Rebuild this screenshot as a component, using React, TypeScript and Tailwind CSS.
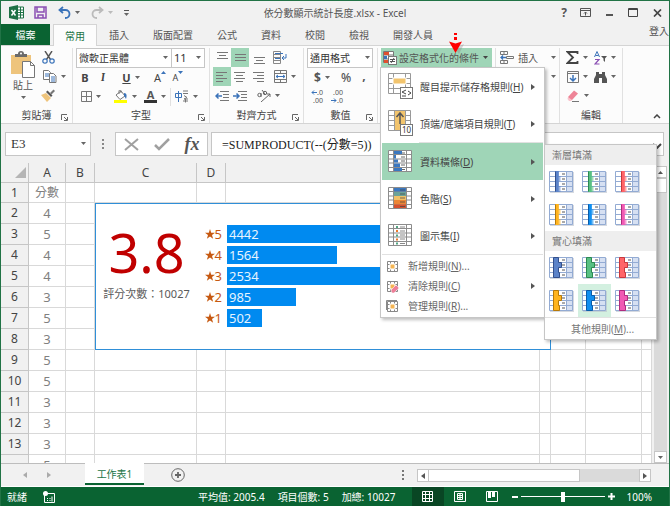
import React from "react";

const ratings = [
  { star: 5, count: 4442 },
  { star: 4, count: 1564 },
  { star: 3, count: 2534 },
  { star: 2, count: 985 },
  { star: 1, count: 502 },
];

const scores = [4, 5, 4, 4, 3, 5, 3, 5, 5, 3, 3, 3, 5];

const tabs = ["插入", "版面配置", "公式", "資料", "校閱", "檢視", "開發人員"];

const barColors = [
  { name: "藍色", fill: "#5b83c9", line: "#33508c" },
  { name: "綠色", fill: "#58c083", line: "#2c8a50" },
  { name: "紅色", fill: "#ff6468", line: "#c8383c" },
  { name: "橙色", fill: "#ffb41f", line: "#b87a08" },
  { name: "淺藍色", fill: "#0f8ef0", line: "#0a5ca8" },
  { name: "紫色", fill: "#f05ab4", line: "#b02c7e" },
];

const Caret: React.FC<{ className?: string }> = ({ className = "text-[#666]" }) => (
  <svg className={`shrink-0 ${className}`} width="5" height="3" viewBox="0 0 5 3">
    <path d="M0 0h5L2.5 3z" fill="currentColor" />
  </svg>
);

const RightCaret = () => (
  <svg width="4" height="6" viewBox="0 0 4 6">
    <path d="M0 0l4 3-4 3z" fill="#555" />
  </svg>
);

const Launcher = () => (
  <svg width="7" height="7" viewBox="0 0 7 7" fill="none" stroke="#666">
    <path d="M.5 6V.5H6M3 3l3 3M6.5 3v3.5H3" />
  </svg>
);

const Divider = () => <span className="h-[18px] w-px bg-[#e1e1e1]" />;

interface ToolProps {
  label: string;
  active?: boolean;
  wide?: boolean;
  caret?: boolean;
  children: React.ReactNode;
}

const Tool: React.FC<ToolProps> = ({ label, active, wide, caret, children }) => (
  <button
    aria-label={label}
    className={`flex h-[19px] items-center justify-center gap-1 ${caret ? "w-[30px]" : wide ? "w-[20px]" : "w-[18px]"} ${active ? "bg-[#9fd5b7]" : ""}`}
  >
    {children}
    {caret && <Caret />}
  </button>
);

interface GroupProps {
  label?: string;
  width: string;
  launcher?: boolean;
  children: React.ReactNode;
}

const Group: React.FC<GroupProps> = ({ label, width, launcher, children }) => (
  <section className={`flex shrink-0 flex-col border-r border-[#e1e1e1] ${width}`}>
    <div className="h-[59px] px-[3px]">{children}</div>
    <div className="relative flex h-4 items-center justify-center">
      {label && <span>{label}</span>}
      {launcher && (
        <button aria-label={`${label}設定`} className="absolute right-1 bottom-0.5">
          <Launcher />
        </button>
      )}
    </div>
  </section>
);

const AlignIcon: React.FC<{ lines: string }> = ({ lines }) => (
  <svg width="13" height="13" viewBox="0 0 13 13" fill="none" stroke="#777">
    <path d={lines} />
  </svg>
);

const SmallBars: React.FC<{ fill: string; line: string; solid?: boolean }> = ({ fill, line, solid }) => {
  const id = `fade-${fill.slice(1)}`;
  return (
    <svg width="25" height="22" viewBox="0 0 25 22">
      <defs>
        <linearGradient id={id}>
          <stop offset="0" stopColor={fill} />
          <stop offset="0.5" stopColor={fill} />
          <stop offset="1" stopColor={fill} stopOpacity="0.15" />
        </linearGradient>
      </defs>
      <rect x="1" y="1" width="24" height="21" fill="#b9c0cc" opacity="0.6" />
      <rect x="0.5" y="0.5" width="23" height="20" fill="#fff" />
      <path d="M17.5.5h6v20h-6z" fill="#d6e0f2" />
      <path d="M.5.5h23v20H.5zM.5 5.5h23M.5 10.5h23M.5 15.5h23M17.5.5v20M6.5.5v20" fill="none" stroke="#93abd3" />
      <path d="M13 3h3M13 8h3M13 13h3M13 18h3" stroke="#555" />
      {solid ? (
        <path d="M4.500 .5h5v5h3v5h-3v5h1v5h-6z" fill={fill} stroke={line} />
      ) : (
        <>
          <path d="M6 0h4v5h2v5h-2v5h2v6H6z" fill={`url(#${id})`} />
          <path d="M6.500 .5v20" stroke={line} />
        </>
      )}
    </svg>
  );
};

const GridBase = () => (
  <>
    <rect x="0.5" y="0.5" width="23" height="21" fill="#fff" />
    <path d="M.5.5h23v21H.5zM.5 4.500h23M.5 9h23M.5 13h23M.5 17.500h23M5.500 .5v21M18.500 .5v21" fill="none" stroke="#8c8c8c" />
  </>
);

const HighlightIcon = () => (
  <svg width="25" height="27" viewBox="0 0 25 27">
    <path d="M.5.5h22v20H.5zM.5 5.500h22M.5 10.500h22M.5 15.500h22M5.500 .5v20M17.500 .5v20" fill="#fff" stroke="#999" />
    <path d="M5 5h13v6H5z" fill="#f2c46d" stroke="#fff" />
    <rect x="12.500" y="14.500" width="12" height="11" fill="#fff" stroke="#777" />
    <path d="M18 17l-4 2 4 2M14 23h4M20 18l3 2-3 2" fill="none" stroke="#444" />
  </svg>
);

const TopBottomIcon = () => (
  <svg width="25" height="27" viewBox="0 0 25 27">
    <path d="M.5.5h22v20H.5zM.5 5.500h22M.5 10.500h22M.5 15.500h22M6.500 .5v20M17.500 .5v20" fill="#fff" stroke="#999" />
    <path d="M7 1h10v19H7z" fill="#f2c46d" />
    <path d="M12 14V3M8.500 7L12 3l3.500 4" fill="none" stroke="#555" strokeWidth="1.500" />
    <rect x="12.500" y="14.500" width="12" height="11" fill="#fff" stroke="#777" />
    <text x="14" y="23" fontSize="8" fill="#333" fontFamily="Noto Sans">10</text>
  </svg>
);

const DataBarIcon = () => (
  <svg width="25" height="23" viewBox="0 0 25 23">
    <GridBase />
    <path d="M6 1h8v3H6zM6 5h2v3.500H6zM6 9.500h4v3H6zM6 13.500h6v3.500H6zM6 18h8v3H6z" fill="#3b78c0" />
    <path d="M14 3h3M13 7h4M13 11h4M13 15h4M14 19.500h3" stroke="#666" />
  </svg>
);

const ColorScaleIcon = () => (
  <svg width="25" height="23" viewBox="0 0 25 23">
    <GridBase />
    <path d="M6 1h12v3.500H6z" fill="#3b78c0" />
    <path d="M6 5h12v4H6z" fill="#6ba398" />
    <path d="M6 9h12v4H6z" fill="#f0c167" />
    <path d="M6 13h12v4.500H6z" fill="#ec8635" />
    <path d="M6 17.500h12V21H6z" fill="#d6502e" />
    <path d="M12 3h5M12 7h5M12 11h5M12 15h5M12 19.500h5" stroke="#444" opacity="0.7" />
  </svg>
);

const IconSetIcon = () => (
  <svg width="25" height="23" viewBox="0 0 25 23">
    <GridBase />
    <path d="M8 2h2v2H8zM8 10.500h2v2H8zM8 18.500h2v2H8z" fill="#53a583" />
    <path d="M8 6h2v2H8zM8 14.500h2v2H8z" fill="#ec7a2c" />
    <path d="M12 3h5M12 7h5M12 11h5M12 15h5M12 19.500h5" stroke="#888" />
  </svg>
);

const RuleIcon: React.FC<{ kind: "new" | "clear" | "manage" }> = ({ kind }) => (
  <svg width="13" height="13" viewBox="0 0 13 13" fill="none">
    {kind === "manage" && <path d="M.5 10V.5H11" stroke="#888" />}
    <path d="M1.500 1.500h10v10h-10zM4.500 1.500v2M8.500 1.500v2M4.500 9.500v2M8.500 9.500v2M1.500 4.500h2M1.500 8.500h2M9.500 4.500h2M9.500 8.500h2" stroke="#888" />
    <path d="M4.500 4.500h4v4h-4z" fill="#f4b554" />
    {kind === "clear" && <path d="M5 10l5-5 3 3-5 5H6z" fill="#ee7f98" stroke="#fff" strokeWidth="0.500" />}
  </svg>
);

interface MenuItemProps {
  icon: React.ReactNode;
  text: string;
  hotkey: string;
  active?: boolean;
}

const MenuItem: React.FC<MenuItemProps> = ({ icon, text, hotkey, active }) => (
  <button
    role="menuitem"
    className={`flex h-[37px] w-full items-center pr-2 pl-1.5 ${active ? "bg-[#9fd5b7]" : ""}`}
  >
    <span className="w-8">{icon}</span>
    <span className="flex-1 text-left">
      {text}(<u>{hotkey}</u>)
    </span>
    <RightCaret />
  </button>
);

const RuleItem: React.FC<{ kind: "new" | "clear" | "manage"; text: string; hotkey: string }> = ({ kind, text, hotkey }) => (
  <button role="menuitem" className="flex h-5 w-full items-center pr-2 pl-1 text-[#666]">
    <span className="w-[22px]">
      <RuleIcon kind={kind} />
    </span>
    <span className="flex-1 text-left">
      {text}(<u>{hotkey}</u>){kind !== "clear" && "..."}
    </span>
    {kind === "clear" && <RightCaret />}
  </button>
);

const DataBarGallery = () => (
  <div className="absolute top-px left-full z-20 ml-px w-[113px] border border-[#c6c6c6] bg-white text-[#777] shadow-[2px_2px_3px_rgba(0,0,0,0.25)]">
    {[
      { title: "漸層填滿", solid: false },
      { title: "實心填滿", solid: true },
    ].map(({ title, solid }) => (
      <div key={title}>
        <div className="flex h-5 items-center bg-[#eee] pl-[7px]">{title}</div>
        <div className="grid w-[99px] grid-cols-3">
          {barColors.map((color) => (
            <button
              key={color.name}
              aria-label={`${color.name}${title}`}
              className={`flex h-[33px] items-center justify-center ${solid && color.name === "淺藍色" ? "bg-[#d3f0e0]" : ""}`}
            >
              <SmallBars fill={color.fill} line={color.line} solid={solid} />
            </button>
          ))}
        </div>
      </div>
    ))}
    <button role="menuitem" className="h-[22px] w-full border-t border-[#e1e1e1] pl-1">
      其他規則(<u>M</u>)...
    </button>
  </div>
);

const FormatMenu = () => (
  <div role="menu" className="absolute top-full left-[-1px] z-10 w-[165px] border border-[#c6c6c6] bg-white px-px pb-px shadow-[2px_2px_3px_rgba(0,0,0,0.25)]">
    <MenuItem icon={<HighlightIcon />} text="醒目提示儲存格規則" hotkey="H" />
    <MenuItem icon={<TopBottomIcon />} text="頂端/底端項目規則" hotkey="T" />
    <div className="ml-[37px] h-px bg-[#e1e1e1]" />
    <div className="relative">
      <MenuItem icon={<DataBarIcon />} text="資料橫條" hotkey="D" active />
      <DataBarGallery />
    </div>
    <MenuItem icon={<ColorScaleIcon />} text="色階" hotkey="S" />
    <MenuItem icon={<IconSetIcon />} text="圖示集" hotkey="I" />
    <div className="mb-px h-px bg-[#e1e1e1]" />
    <RuleItem kind="new" text="新增規則" hotkey="N" />
    <RuleItem kind="clear" text="清除規則" hotkey="C" />
    <RuleItem kind="manage" text="管理規則" hotkey="R" />
  </div>
);

const TitleBar = () => (
  <header className="grid h-[23px] grid-cols-[1fr_auto_1fr] items-center text-[#555]">
    <div className="flex items-center pl-2">
      <svg width="15" height="15" viewBox="0 0 15 15">
        <path d="M8 2h6.500v11H8z" fill="#fff" stroke="#1e7145" />
        <path d="M9 5h5M9 7.500h5M9 10h5M11.500 2v11" stroke="#1e7145" />
        <path d="M0 2l9-2v15l-9-2z" fill="#1e7145" />
        <path d="M2.500 5l4 5.500M6.500 5l-4 5.500" stroke="#fff" strokeWidth="1.500" />
      </svg>
      <button aria-label="儲存檔案" className="ml-2.5">
        <svg width="13" height="13" viewBox="0 0 13 13" fill="none" stroke="#8a4fb3" strokeWidth="1.500">
          <path d="M1 1h11v11H1zM3 1v5h7V1M4 12V9h5v3" />
        </svg>
      </button>
      <button aria-label="復原" className="ml-[11px] flex items-center gap-1">
        <svg width="13" height="13" viewBox="0 0 13 13" fill="none" stroke="#3b73b9" strokeWidth="1.800">
          <path d="M5 1L1.500 4 5 7M2 4h5.500a4 4 0 010 8H7" />
        </svg>
        <Caret />
      </button>
      <button aria-label="重複" className="ml-[11px] flex items-center gap-1">
        <svg width="13" height="13" viewBox="0 0 13 13" fill="none" stroke="#bbb" strokeWidth="1.800">
          <path d="M8 1l3.500 3L8 7M11 4H5.500a4 4 0 000 8H6" />
        </svg>
        <Caret className="text-[#bbb]" />
      </button>
      <button aria-label="自訂快速存取工具列" className="ml-[11px] flex flex-col items-center gap-0.5">
        <span className="h-px w-[5px] bg-[#555]" />
        <Caret />
      </button>
    </div>
    <h1 className="text-[10px]">依分數顯示統計長度.xlsx - Excel</h1>
    <div className="flex items-center justify-end gap-[13px] pr-[7px]">
      <button aria-label="說明" className="text-[12px] leading-4 font-bold">?</button>
      <button aria-label="功能區顯示選項">
        <svg width="11" height="9" viewBox="0 0 11 9" fill="none" stroke="#555">
          <path d="M.5.5h10v8H.5zM.5 2.500h10M5.500 7.500V4M4 5.500L5.500 4 7 5.500" />
        </svg>
      </button>
      <button aria-label="最小化" className="flex h-3 w-[11px] items-center">
        <span className="mx-auto mt-1 h-0.5 w-[7px] bg-[#555]" />
      </button>
      <button aria-label="最大化">
        <svg width="10" height="9" viewBox="0 0 10 9" fill="none" stroke="#444">
          <path d="M.5.5h9v8h-9zM.5 1.500h9" />
        </svg>
      </button>
      <button aria-label="關閉" className="ml-0.5">
        <svg width="9" height="8" viewBox="0 0 9 8" stroke="#444" strokeWidth="1.700">
          <path d="M1 .5l7 7M8 .5l-7 7" />
        </svg>
      </button>
    </div>
  </header>
);

const TabStrip = () => (
  <nav className="flex h-[21px] text-[#555]">
    <button className="w-[49px] bg-[#0a6332] text-white">檔案</button>
    <button className="relative z-10 -mb-px ml-[3px] h-[22px] w-11 border border-b-0 border-[#d4d4d4] bg-[#fcfcfc] text-[#217346]">
      常用
    </button>
    {tabs.map((tab) => (
      <button key={tab} className="px-3">
        {tab}
      </button>
    ))}
    <button className="ml-auto h-[14px] leading-[14px]">登入</button>
  </nav>
);

const ClipboardGroup = () => (
  <Group label="剪貼簿" width="w-[72px]" launcher>
    <div className="flex">
      <button className="ml-[7px] flex w-[26px] flex-col items-center pt-[3px] text-[#555]">
        <svg width="24" height="27" viewBox="0 0 24 27">
          <path d="M0 4h20v19H0z" fill="#eec47c" />
          <path d="M4 3h3a3 3 0 016 0h3v3H4z" fill="#6a6a6a" />
          <circle cx="10" cy="2.500" r="1" fill="#fff" />
          <path d="M11.500 10.500h8l4 4v12h-12zM19.500 10.500v4h4" fill="#fff" stroke="#777" />
        </svg>
        <span className="leading-[14px]">貼上</span>
        <span className="mt-1">
          <Caret />
        </span>
      </button>
      <div className="ml-1 flex flex-col">
        <Tool label="剪下">
          <svg width="13" height="13" viewBox="0 0 13 13" fill="none">
            <path d="M3 0l5.500 8.500M10 0L4.500 8.500" stroke="#555" strokeWidth="1.400" />
            <circle cx="3" cy="10" r="2.200" stroke="#3b73b9" strokeWidth="1.200" />
            <circle cx="10" cy="10" r="2.200" stroke="#3b73b9" strokeWidth="1.200" />
          </svg>
        </Tool>
        <Tool label="複製" caret>
          <svg width="14" height="13" viewBox="0 0 14 13">
            <path d="M.5.5h5l2 2v7h-7z" fill="#fff" stroke="#777" />
            <path d="M2 4h4M2 6h4" stroke="#3b73b9" />
            <path d="M6.500 3.500h4l2.500 2.500v6.500H6.500z" fill="#fff" stroke="#777" />
            <path d="M8 7h4M8 9h4M8 11h4" stroke="#3b73b9" />
          </svg>
        </Tool>
        <Tool label="複製格式">
          <svg width="14" height="13" viewBox="0 0 14 13">
            <path d="M0 6l5-2 5 5-4 4z" fill="#eec47c" />
            <path d="M5 3l5 5 1.500-1.500-5-5z" fill="#555" />
            <path d="M9 4l3.500-3.500L14 2l-3.500 3.500z" fill="#777" />
          </svg>
        </Tool>
      </div>
    </div>
  </Group>
);

const FontGroup = () => (
  <Group label="字型" width="w-[137px]" launcher>
    <div className="flex h-5">
      <div className="relative w-24">
        <select aria-label="字型名稱" className="h-5 w-full appearance-none border border-[#c6c6c6] bg-white pl-0.5 text-[#333]">
          <option>微軟正黑體</option>
        </select>
        <span className="pointer-events-none absolute top-2 right-1"><Caret /></span>
      </div>
      <div className="relative -ml-px w-[34px]">
        <select aria-label="字型大小" className="h-5 w-full appearance-none border border-[#c6c6c6] bg-white pl-0.5 text-[11px] text-[#333]">
          <option>11</option>
        </select>
        <span className="pointer-events-none absolute top-2 right-1"><Caret /></span>
      </div>
    </div>
    <div className="flex items-center text-[11px] text-[#444]">
      <Tool label="粗體"><b>B</b></Tool>
      <Tool label="斜體"><i className="font-serif font-bold">I</i></Tool>
      <span className="ml-1">
        <Tool label="底線" caret><u className="font-bold">U</u></Tool>
      </span>
      <span className="mr-1 ml-px"><Divider /></span>
      <Tool label="放大字型">
        <span className="flex">A<svg width="5" height="3" viewBox="0 0 5 3"><path d="M0 3h5L2.500 0z" fill="#3b73b9" /></svg></span>
      </Tool>
      <Tool label="縮小字型">
        <span className="flex text-[9px]">A<svg width="5" height="3" viewBox="0 0 5 3"><path d="M0 0h5L2.500 3z" fill="#3b73b9" /></svg></span>
      </Tool>
    </div>
    <div className="flex items-center">
      <Tool label="框線" caret>
        <svg width="11" height="11" viewBox="0 0 11 11" fill="none" stroke="#777">
          <path d="M.5.5h10v10H.5zM5.500 0v11M0 5.500h11" />
        </svg>
      </Tool>
      <span className="mx-0.5"><Divider /></span>
      <Tool label="填滿色彩" caret>
        <svg width="14" height="13" viewBox="0 0 14 13">
          <path d="M2 5l5-4 4 5-5 3.500z" fill="#fff" stroke="#777" />
          <path d="M5 4V1a1 1 0 012 0v2" fill="none" stroke="#777" />
          <path d="M10 3c3 0 3 3 2 6-1-1-1-3-2-3z" fill="#3b73b9" />
          <path d="M0 10h13v3H0z" fill="#ff0" />
        </svg>
      </Tool>
      <Tool label="字型色彩" caret>
        <span className="flex flex-col items-center text-[11px] leading-[10px] font-bold text-[#555]">
          A<span className="h-[3px] w-[13px] bg-[#333]" />
        </span>
      </Tool>
      <Divider />
      <Tool label="注音標示" caret>
        <svg width="14" height="13" viewBox="0 0 14 13" fill="none">
          <path d="M3.500 1v11M.5 3.500h6v4h-6z" stroke="#3b73b9" />
          <path d="M8 1h5M8 3.500h5M9 5.500l3 2-3 1.500h4M10.500 9v3.500M8 11h5" stroke="#777" />
        </svg>
      </Tool>
    </div>
  </Group>
);

const AlignGroup = () => (
  <Group label="對齊方式" width="w-[94px]" launcher>
    <div className="flex">
      <Tool label="靠上對齊"><AlignIcon lines="M1 1.500h11M3 4.500h7M1 7.500h11" /></Tool>
      <Tool label="置中對齊" active><AlignIcon lines="M1 3.500h11M1 6.500h11M1 9.500h11" /></Tool>
      <Tool label="靠下對齊" wide><AlignIcon lines="M1 6.500h11M3 9.500h7M1 12.500h11" /></Tool>
      <span className="ml-0.5">
        <Tool label="自動換列">
          <svg width="14" height="13" viewBox="0 0 14 13" fill="none">
            <path d="M.5.5h7v12h-7zM.5 3.500h7M.5 6.500h7M.5 9.500h7" stroke="#888" />
            <path d="M2 2.500h8M2 7.500h5" stroke="#3b73b9" />
            <path d="M13 3v4H9M11 5L9 7l2 2" stroke="#3b73b9" />
          </svg>
        </Tool>
      </span>
    </div>
    <div className="flex">
      <Tool label="靠左對齊" active><AlignIcon lines="M1 2.500h11M1 5.500h7M1 8.500h11M1 11.500h7" /></Tool>
      <Tool label="置中"><AlignIcon lines="M1 2.500h11M3 5.500h7M1 8.500h11M3 11.500h7" /></Tool>
      <Tool label="靠右對齊" wide><AlignIcon lines="M1 2.500h11M5 5.500h7M1 8.500h11M5 11.500h7" /></Tool>
      <span className="ml-0.5">
        <Tool label="跨欄置中" caret>
          <svg width="13" height="13" viewBox="0 0 13 13" fill="none">
            <path d="M.5.5h12v12H.5zM.5 3.500h12M.5 9.500h12M6.500 .5v3M6.500 9.500v3" stroke="#777" />
            <path d="M2 6.500h9M4 5L2 6.500 4 8M9 5l2 1.500L9 8" stroke="#3b73b9" />
          </svg>
        </Tool>
      </span>
    </div>
    <div className="flex items-center">
      <Tool label="減少縮排">
        <svg width="14" height="10" viewBox="0 0 14 10" fill="none" stroke="#777">
          <path d="M5 .5h9M8 3.500h6M8 6.500h6M5 9.500h9" />
          <path d="M7 5H1M3.500 2.500L1 5l2.500 2.500" stroke="#3b73b9" strokeWidth="1.500" />
        </svg>
      </Tool>
      <Tool label="增加縮排">
        <svg width="14" height="10" viewBox="0 0 14 10" fill="none" stroke="#777">
          <path d="M5 .5h9M8 3.500h6M8 6.500h6M5 9.500h9" />
          <path d="M0 5h6M3.500 2.500L6 5 3.500 7.500" stroke="#3b73b9" strokeWidth="1.500" />
        </svg>
      </Tool>
      <span className="mr-px ml-[3px]"><Divider /></span>
      <Tool label="方向" caret>
        <svg width="14" height="13" viewBox="0 0 14 13" fill="none" stroke="#666">
          <path d="M4 13l9-8M10 5h3v3" />
          <circle cx="2.500" cy="6" r="1.700" />
          <path d="M4 4v4M5 1l3 4" />
          <circle cx="8" cy="4" r="1.700" />
        </svg>
      </Tool>
    </div>
  </Group>
);

const NumberGroup = () => (
  <Group label="數值" width="w-[74px]" launcher>
    <div className="relative h-5">
      <select aria-label="數值格式" className="h-5 w-[66px] appearance-none border border-[#c6c6c6] bg-white pl-0.5 text-[#333]">
        <option>通用格式</option>
      </select>
      <span className="pointer-events-none absolute top-2 right-1"><Caret /></span>
    </div>
    <div className="flex items-center text-[12px] text-[#555]">
      <Tool label="會計數字格式" caret><b>$</b></Tool>
      <Tool label="百分比樣式"><span className="font-medium">%</span></Tool>
      <Tool label="千分位樣式"><b className="pb-1">,</b></Tool>
    </div>
    <div className="flex items-center text-[7px] leading-[8px] text-[#555]">
      <Tool label="增加小數位數" wide>
        <span className="flex flex-col items-end">
          <span className="flex items-center">
            <svg width="6" height="5" viewBox="0 0 6 5" fill="none" stroke="#3b73b9"><path d="M6 2.500H1M3 .5l-2 2 2 2" /></svg>.0
          </span>
          <span>.00</span>
        </span>
      </Tool>
      <Tool label="減少小數位數" wide>
        <span className="flex flex-col items-end">
          <span>.00</span>
          <span className="flex items-center">
            <svg width="6" height="5" viewBox="0 0 6 5" fill="none" stroke="#3b73b9"><path d="M0 2.500h5M3 .5l2 2-2 2" /></svg>.0
          </span>
        </span>
      </Tool>
    </div>
  </Group>
);

const StylesGroup = () => (
  <Group width="w-[118px]">
    <div className="relative">
      <button aria-expanded="true" className="flex h-[19px] w-[111px] items-center bg-[#9fd5b7] pl-0.5 text-[#555]">
        <svg width="14" height="14" viewBox="0 0 14 14">
          <path d="M.5.5h10v11H.5zM.5 4h10M.5 8h10M5.500 .5v11" fill="#fff" stroke="#777" />
          <path d="M1 1h5v3H1z" fill="#e0502f" />
          <path d="M1 5h3v3H1z" fill="#3b73b9" />
          <path d="M1 9h4v3H1z" fill="#e0502f" />
          <rect x="5.500" y="5.500" width="8" height="8" fill="#fff" stroke="#777" />
          <path d="M7 8.500h5M7 10.500h5M11 7l-3 5" stroke="#555" />
        </svg>
        <span className="ml-0.5 flex-1 text-left whitespace-nowrap">設定格式化的條件</span>
        <span className="mr-1"><Caret className="text-[#444]" /></span>
      </button>
      <svg className="absolute -top-4 left-[68px] z-10" width="16" height="24" viewBox="0 0 16 24">
        <path d="M9 3v6M3 12l7 2 5-2-5 10z" fill="#888" opacity="0.350" />
        <path d="M5 1h3v2H5zM5 5h3v3H5zM0 9.500l6.500 2 6.500-2L6.500 21z" fill="#f00" />
      </svg>
      <FormatMenu />
    </div>
  </Group>
);

const CellsGroup = () => (
  <Group width="w-[64px]">
    <button className="flex h-[19px] w-full items-center gap-1 pl-px text-[#555]">
      <svg width="14" height="13" viewBox="0 0 14 13" fill="none">
        <path d="M.5.5h7v3h-7zM4 .5v3M.5 9.500h7v3h-7zM4 9.500v3M6.500 5.500h7v2h-7z" stroke="#777" />
        <path d="M6 6.500H1M3 4.500l-2 2 2 2" stroke="#3b73b9" strokeWidth="1.300" />
      </svg>
      <span className="flex-1 text-left">插入</span>
      <Caret />
    </button>
    <button aria-label="刪除" className="flex h-[19px] w-full items-center justify-end">
      <Caret />
    </button>
  </Group>
);

const EditGroup = () => (
  <Group label="編輯" width="w-[63px]">
    <div className="flex">
      <Tool label="加總" caret>
        <svg width="13" height="13" viewBox="0 0 13 13" fill="none" stroke="#444" strokeWidth="1.800">
          <path d="M11.500 3V1H1.500L7 6.500 1.500 12h10v-2" />
        </svg>
      </Tool>
      <Tool label="排序與篩選" caret>
        <svg width="13" height="14" viewBox="0 0 13 14" fill="none">
          <path d="M.5 6L3 .5 5.500 6M1.500 4.500h3" stroke="#3b73b9" />
          <path d="M1 8.500h4L1 13h4.500" stroke="#8a4fb3" strokeWidth="1.200" />
          <path d="M7 5h6L11 7.500V11L9.500 9.500v-2z" fill="#555" />
        </svg>
      </Tool>
    </div>
    <div className="flex">
      <Tool label="填滿" caret>
        <svg width="12" height="12" viewBox="0 0 12 12" fill="none">
          <path d="M.5.5h11v11H.5zM.5 2.500h11" stroke="#777" />
          <path d="M6 4v6M3 7l3 3 3-3" stroke="#3b73b9" strokeWidth="1.500" />
        </svg>
      </Tool>
      <Tool label="尋找與選取" caret>
        <svg width="13" height="12" viewBox="0 0 13 12" fill="#555">
          <path d="M2 1h3v2h3V1h3v3l2 4v4H8V7H5v5H0V8l2-4z" />
        </svg>
      </Tool>
    </div>
    <Tool label="清除" caret>
      <svg width="13" height="12" viewBox="0 0 13 12">
        <path d="M1 7l6-6.500 4 3L5 10H2.500z" fill="#ee8497" />
        <path d="M1 7l4 3-1 1H2L.5 9z" fill="#f9c3cc" />
        <path d="M5 11.500h7" stroke="#777" />
      </svg>
    </Tool>
  </Group>
);

const FormulaBar = () => (
  <div className="flex h-[39px] items-start gap-[3px] pt-2 pr-[5px] pl-1">
    <div className="relative w-[86px]">
      <input aria-label="名稱方塊" defaultValue="E3" className="h-6 w-full border border-[#c6c6c6] bg-white pl-[5px] font-['Liberation_Serif','Noto_Sans_CJK_TC',serif] text-[13px] text-[#333]" />
      <span className="pointer-events-none absolute top-[10px] right-[5px]"><Caret /></span>
    </div>
    <svg className="mt-[7px] ml-[7px]" width="5" height="10" viewBox="0 0 5 10" fill="#888">
      <path d="M1 0h2v2H1zM1 4h2v2H1zM1 8h2v2H1z" />
    </svg>
    <div className="ml-[6px] flex h-6 w-[93px] items-center justify-around border border-[#c6c6c6] bg-white">
      <button aria-label="取消">
        <svg width="15" height="13" viewBox="0 0 15 13" stroke="#a0a0a0" strokeWidth="2">
          <path d="M1 1l13 11M14 1L1 12" />
        </svg>
      </button>
      <button aria-label="輸入">
        <svg width="16" height="13" viewBox="0 0 16 13" fill="none" stroke="#a0a0a0" strokeWidth="2.500">
          <path d="M1 7l4 4L15 1" />
        </svg>
      </button>
      <button aria-label="插入函數" className="font-['Liberation_Serif',serif] text-[18px] leading-5 font-bold text-[#555] italic">
        fx
      </button>
    </div>
    <div className="relative min-w-0 flex-1">
      <input
        aria-label="資料編輯列"
        defaultValue="=SUMPRODUCT(--(分數=5))"
        className="h-6 w-full border border-[#c6c6c6] bg-white pl-[10px] font-['Liberation_Serif','Noto_Sans_CJK_TC',serif] text-[12px] text-[#222]"
      />
      <svg className="absolute right-0.5 bottom-[7px]" width="10" height="6" viewBox="0 0 10 6" fill="none" stroke="#444" strokeWidth="2">
        <path d="M1 1l4 4 4-4" />
      </svg>
    </div>
  </div>
);

const RatingCard = () => {
  const top = ratings[0].count;
  return (
    <div className="flex h-[145px] bg-white pr-[11px]">
      <div className="flex w-[101px] shrink-0 flex-col items-center pt-[18px]">
        <span className="text-[54px] leading-[60px] text-[#c00000]">3.8</span>
        <span className="pt-1 text-[11px] leading-4 text-[#595959]">評分次數：10027</span>
      </div>
      <ul className="flex-1 pt-[19px]">
        {ratings.map(({ star, count }) => (
          <li key={star} className="flex h-[21px] items-center">
            <span className="flex w-[30px] items-center justify-end pr-[5px] text-[13px] text-[#c65911]">
              <svg width="10" height="10" viewBox="0 0 10 10">
                <path d="M5 0l1.200 3.700H10L7 6l1.100 3.800L5 7.500 1.900 9.800 3 6 0 3.700h3.800z" fill="#c65911" />
              </svg>
              {star}
            </span>
            <div className="flex-1">
              <div className="h-[18px] bg-[#008af0] pl-0.5 text-[13px] leading-[18px] text-[#e6f4ff]" style={{ width: `${(count / top) * 100}%` }}>
                {count}
              </div>
            </div>
          </li>
        ))}
      </ul>
    </div>
  );
};

const cell = "border-r border-b border-[#d9d9d9] p-0";
const head = "border-r border-b border-[#c6c6c6] bg-[#f1f1f1] p-0 font-normal text-[#444]";

const Sheet = () => (
  <div className="flex min-h-0 flex-1">
    <div className="min-w-0 flex-1 overflow-hidden bg-white">
      <table className="w-full table-fixed border-separate border-spacing-0 text-center text-[12px] leading-4">
        <colgroup>
          <col className="w-[28px]" />
          <col className="w-[37px]" />
          <col className="w-[29px]" />
          <col className="w-[102px]" />
          <col className="w-[29px]" />
          <col />
          <col className="w-[11px]" />
          <col className="w-[35px]" />
          <col className="w-[56px]" />
          <col className="w-[10px]" />
        </colgroup>
        <thead>
          <tr className="h-5">
            <th className={head}>
              <svg className="mr-0.5 ml-auto" width="11" height="11" viewBox="0 0 11 11">
                <path d="M11 0v11H0z" fill="#b5b5b5" />
              </svg>
            </th>
            {["A", "B", "C", "D"].map((name) => (
              <th key={name} className={head}>{name}</th>
            ))}
            {Array.from({ length: 5 }, (_, i) => (
              <th key={i} className={head} />
            ))}
          </tr>
        </thead>
        <tbody>
          <tr className="h-5">
            <th className={head}>1</th>
            <td className={`${cell} text-[#808080]`}>分數</td>
            {Array.from({ length: 8 }, (_, i) => (
              <td key={i} className={cell} />
            ))}
          </tr>
          {scores.map((score, i) => (
            <tr key={i} className="h-[21px]">
              <th className={head}>{i < 12 && i + 2}</th>
              <td className={`${cell} text-[13px] text-[#808080]`}>{score}</td>
              <td className={cell} />
              {i === 0 && (
                <td colSpan={4} rowSpan={7} className="border border-[#2f8fd8] p-0 text-left">
                  <RatingCard />
                </td>
              )}
              {Array.from({ length: i < 7 ? 3 : 7 }, (_, c) => (
                <td key={c} className={cell} />
              ))}
            </tr>
          ))}
        </tbody>
      </table>
    </div>
    <div className="ml-[2px] flex w-[15px] flex-col pt-[3px] pr-0.5">
      <button aria-label="向上捲動" className="flex h-3 items-center justify-center border border-[#c6c6c6] bg-white">
        <svg width="5" height="3" viewBox="0 0 5 3"><path d="M0 3h5L2.500 0z" fill="#555" /></svg>
      </button>
      <div className="flex-1 bg-[#dadada]">
        <div className="h-[15px] border border-[#c6c6c6] bg-white" />
      </div>
      <button aria-label="向下捲動" className="flex h-3 items-center justify-center border border-[#c6c6c6] bg-white">
        <Caret />
      </button>
    </div>
  </div>
);

const SheetTabs = () => (
  <div className="flex h-[23px] items-start border-t border-[#bdbdbd] pr-[18px]">
    <button aria-label="上一個工作表" className="mt-2 ml-[22px]">
      <svg width="4" height="6" viewBox="0 0 4 6"><path d="M4 0L0 3l4 3z" fill="#aaa" /></svg>
    </button>
    <button aria-label="下一個工作表" className="mt-2 ml-5">
      <svg width="4" height="6" viewBox="0 0 4 6"><path d="M0 0l4 3-4 3z" fill="#aaa" /></svg>
    </button>
    <button className="-mt-px ml-[34px] h-[22px] w-[59px] border-b-2 border-[#0a6332] bg-white pt-0.5 text-[#217346]">工作表1</button>
    <button aria-label="新工作表" className="mt-1 ml-[27px]">
      <svg width="14" height="14" viewBox="0 0 14 14" fill="none" stroke="#666">
        <circle cx="7" cy="7" r="6.300" />
        <path d="M7 4v6M4 7h6" strokeWidth="1.800" />
      </svg>
    </button>
    <svg className="mt-[6px] ml-auto" width="3" height="10" viewBox="0 0 3 10" fill="#777">
      <path d="M0 0h2v2H0zM0 4h2v2H0zM0 8h2v2H0z" />
    </svg>
    <div className="mt-[5px] ml-3 flex h-[13px] w-[36%] bg-[#dadada]">
      <button aria-label="向左捲動" className="flex w-3 items-center justify-center border border-[#c6c6c6] bg-white">
        <svg width="4" height="6" viewBox="0 0 4 6"><path d="M4 0L0 3l4 3z" fill="#555" /></svg>
      </button>
      <div className="-ml-px w-[65%] border border-[#c6c6c6] bg-white" />
      <button aria-label="向右捲動" className="ml-auto flex w-3 items-center justify-center border border-[#c6c6c6] bg-white">
        <RightCaret />
      </button>
    </div>
  </div>
);

const StatusBar = () => (
  <footer className="flex h-5 items-center border-t border-white bg-[#0a6332] text-white">
    <span className="ml-[6px]">就緒</span>
    <svg className="ml-4" width="12" height="12" viewBox="0 0 12 12">
      <path d="M1.500 4v7.500h10V2.500H5M4 7.500h1M4 9.500h1M6.500 7.500h1M6.500 9.500h1M9 5.500v5" fill="none" stroke="#fff" />
      <circle cx="2.500" cy="2.500" r="2.500" fill="#fff" />
    </svg>
    <div className="ml-auto flex gap-[13px]">
      <span>平均值: 2005.4</span>
      <span>項目個數: 5</span>
      <span>加總: 10027</span>
    </div>
    <div className="ml-4 flex h-full">
      <button aria-label="標準模式" className="flex w-8 items-center justify-center bg-[#094624]">
        <svg width="11" height="11" viewBox="0 0 11 11" fill="none" stroke="#fff">
          <path d="M.5.5h10v10H.5zM.5 3.500h10M.5 7.500h10M3.500 .5v10M7.500 .5v10" />
        </svg>
      </button>
      <button aria-label="整頁模式" className="flex w-8 items-center justify-center">
        <svg width="12" height="11" viewBox="0 0 12 11" fill="none" stroke="#fff">
          <path d="M.5.5h11v10H.5zM3.500 2.500h5v6h-5zM3.500 4.500h5M3.500 6.500h5M6 2.500v6" />
        </svg>
      </button>
      <button aria-label="分頁預覽" className="flex w-8 items-center justify-center">
        <svg width="12" height="11" viewBox="0 0 12 11">
          <path d="M.5.5h11v10H.5z" fill="none" stroke="#fff" />
          <path d="M2 1h3v6H2zM6 1h3v5H6z" fill="#fff" />
        </svg>
      </button>
    </div>
    <button aria-label="縮小" className="ml-[4px] flex h-3 w-[6px] items-center">
      <span className="h-0.5 w-[6px] bg-white" />
    </button>
    <input
      type="range"
      aria-label="顯示比例"
      defaultValue={50}
      className="mx-[3px] h-3 w-[84px] appearance-none bg-[linear-gradient(#fff,#fff)] bg-[length:100%_1px] bg-center bg-no-repeat [&::-webkit-slider-thumb]:h-[10px] [&::-webkit-slider-thumb]:w-1 [&::-webkit-slider-thumb]:appearance-none [&::-webkit-slider-thumb]:bg-white"
    />
    <button aria-label="放大">
      <svg width="7" height="7" viewBox="0 0 7 7" stroke="#fff" strokeWidth="2"><path d="M3.500 0v7M0 3.500h7" /></svg>
    </button>
    <span className="mr-[17px] ml-3">100%</span>
  </footer>
);

export default function App() {
  return (
    <div className="flex h-screen flex-col overflow-hidden border border-b-0 border-[#217346] bg-[#f1f1f1] font-['Noto_Sans','Noto_Sans_CJK_TC',sans-serif] text-[10px] leading-[14px] text-[#444]">
      <TitleBar />
      <TabStrip />
      <div className="relative z-[1] flex h-[79px] border-y border-[#d4d4d4] bg-[#fcfcfc] pt-[2px]">
        <ClipboardGroup />
        <FontGroup />
        <AlignGroup />
        <NumberGroup />
        <StylesGroup />
        <CellsGroup />
        <EditGroup />
        <button aria-label="摺疊功能區" className="mr-2 mb-1 ml-auto self-end">
          <svg width="8" height="5" viewBox="0 0 8 5" fill="none" stroke="#444" strokeWidth="1.500">
            <path d="M1 4l3-3 3 3" />
          </svg>
        </button>
      </div>
      <FormulaBar />
      <Sheet />
      <SheetTabs />
      <StatusBar />
    </div>
  );
}
